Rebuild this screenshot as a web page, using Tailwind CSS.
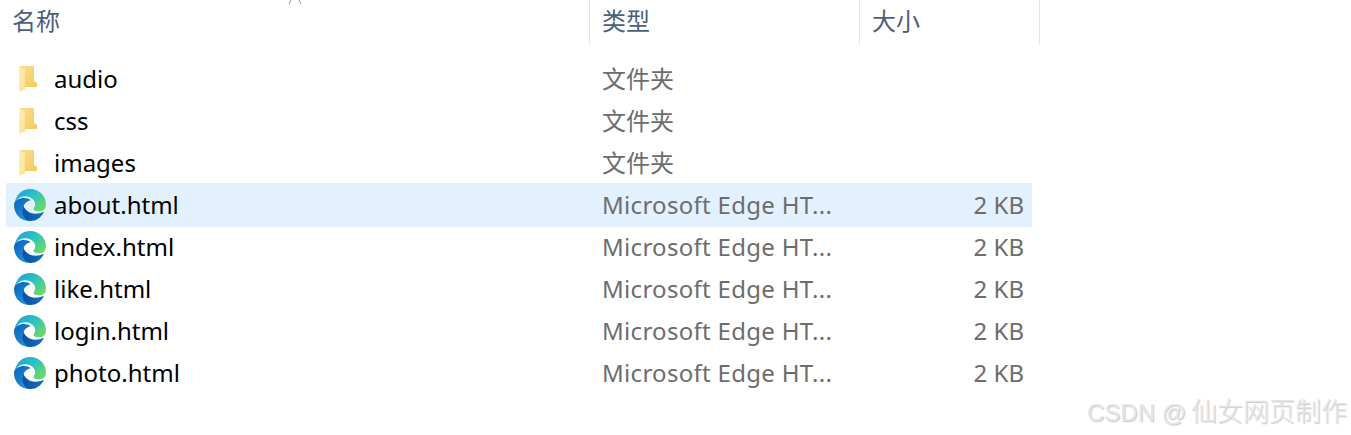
<!DOCTYPE html>
<html lang="zh-CN">
<head>
  <meta charset="UTF-8" />
  <title>文件列表</title>
  <script src="https://cdn.jsdelivr.net/npm/@tailwindcss/browser@4"></script>
</head>
<body class="relative h-[435px] w-[1351px] overflow-hidden bg-white font-['Noto_Sans','Noto_Sans_CJK_SC',sans-serif] text-[24px] leading-[42px]">

  <!-- gradients shared by the icons -->
  <svg class="absolute h-0 w-0">
    <defs>
      <linearGradient id="edgeTop" x1="0" y1="0" x2="1" y2="0.8">
        <stop offset="0" stop-color="#1b9de2" />
        <stop offset="0.5" stop-color="#2cc0c6" />
        <stop offset="1" stop-color="#6fdc5c" />
      </linearGradient>
      <linearGradient id="edgeLeft" x1="0" y1="0" x2="0.6" y2="1">
        <stop offset="0" stop-color="#0c62b8" />
        <stop offset="1" stop-color="#1b93dd" />
      </linearGradient>
      <linearGradient id="edgeBottom" x1="0" y1="0" x2="1" y2="0">
        <stop offset="0" stop-color="#0c4f9e" />
        <stop offset="1" stop-color="#1470c4" />
      </linearGradient>
      <linearGradient id="folderBack" x1="0" y1="0" x2="1" y2="1">
        <stop offset="0" stop-color="#f9dc8c" />
        <stop offset="1" stop-color="#f5cb60" />
      </linearGradient>
      <linearGradient id="folderFront" x1="0" y1="0" x2="1" y2="1">
        <stop offset="0" stop-color="#fff0b8" />
        <stop offset="1" stop-color="#fbdf90" />
      </linearGradient>
    </defs>
  </svg>

  <!-- Encabezado de columnas -->
  <div class="relative flex h-[45px] w-[1040px] leading-[42px] text-[#4c607a]">
    <div class="w-[590px] border-r border-[#e5e5e5] pl-[12px]">名称</div>
    <div class="w-[270px] border-r border-[#e5e5e5] pl-[12px]">类型</div>
    <div class="w-[180px] border-r border-[#e5e5e5] pl-[12px]">大小</div>
    <svg class="absolute left-[288px] top-0 h-[4px] w-[14px]" viewBox="0 0 14 4" fill="none" stroke="#9a9a9a" stroke-width="1">
      <path d="M1 4 3 0M11 0l2 4" />
    </svg>
  </div>

  <!-- Lista de archivos -->
  <div id="rows" class="w-[1032px] pl-[6px] pt-[13px]"></div>

  <div class="absolute left-[1087px] top-[395px] whitespace-nowrap font-['Liberation_Sans','Noto_Sans_CJK_SC',sans-serif] text-[24px] leading-[34px] text-[#e6e6e6] [text-shadow:1px_1px_1px_#c8c8c8]">CSDN @<span class="ml-[5px] text-[26px] font-light">仙女网页制作</span></div>

  <script>
    const folderIcon = `
      <svg class="ml-[13px] h-[26px] w-[18px] shrink-0" viewBox="0 0 18 26">
        <path d="M1 0h14v15l3 2v4H4z" fill="url(#folderBack)" />
        <path d="M0 .5 6 3v20l-5 3-1-2z" fill="url(#folderFront)" />
      </svg>`;

    const edgeIcon = `
      <svg class="ml-[8px] h-[32px] w-[32px] shrink-0" viewBox="0 0 24 24">
        <path fill="url(#edgeTop)" d="M.3 11C1.500 4.500 6 0 12 0c7 0 12 5.200 12 11.600 0 3.400-2.400 5.200-5.200 5.200-2 0-4.200-.8-4.200-1.800 0-.8 1.300-1.400 1.300-3.400 0-3.200-3.300-6.100-7.400-6.100-4 0-7 2.500-8.200 5.500z" />
        <path fill="url(#edgeBottom)" d="M7 12c.5 3.500 4.500 6.500 9 6.500 2.200 0 4-.3 5.700-1.200.5-.3.8.2.3.7-2 3.700-5.500 6-9.500 6-3.800 0-6.500-3-6.500-7 0-1.800.4-3.500 1-5z" />
        <path fill="url(#edgeLeft)" d="M0 12c0-3.200 4-5.200 7.500-5.200 2 0 3.800.6 5 1.600-3.500.4-6.200 4.100-6.200 8.100 0 3 1.700 6 4.500 7.500C4.500 23.500 0 18.500 0 12z" />
      </svg>`;

    const folders = ["audio", "css", "images"];
    const pages = ["about.html", "index.html", "like.html", "login.html", "photo.html"];

    let html = "";
    folders.forEach((name) => {
      html += `
        <div class="flex h-[42px] items-center">
          ${folderIcon}
          <span class="ml-[17px] w-[548px] text-black">${name}</span>
          <span class="text-[#6d6d6d]">文件夹</span>
        </div>`;
    });
    pages.forEach((name, i) => {
      const rowClass = i === 0 ? "relative -my-px h-[44px] bg-[#e2f1fd]" : "h-[42px]";
      html += `
        <div class="flex items-center ${rowClass}">
          ${edgeIcon}
          <span class="ml-[8px] w-[548px] text-black">${name}</span>
          <span class="w-[230px] whitespace-nowrap tracking-[0.3px] text-[#6d6d6d]">Microsoft Edge HT...</span>
          <span class="w-[192px] text-right text-[#6d6d6d]">2 KB</span>
        </div>`;
    });
    document.getElementById("rows").innerHTML = html;
  </script>
</body>
</html>
